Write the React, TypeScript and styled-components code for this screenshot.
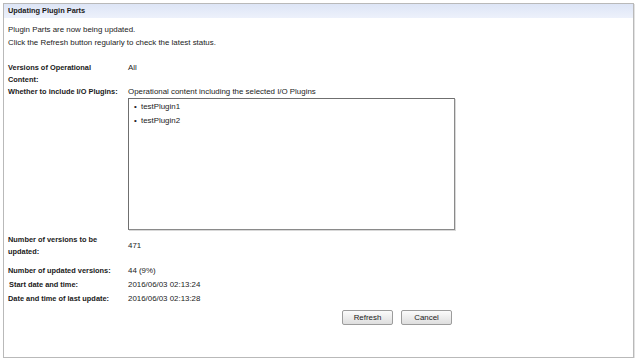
import * as React from "react";
import styled, { createGlobalStyle } from "styled-components";

const GlobalStyle = createGlobalStyle`
  html, body {
    margin: 0;
    padding: 0;
    background: #ffffff;
  }
  body {
    font-family: "Liberation Sans", Arial, sans-serif;
    font-size: 7.9px;
    color: #222;
  }
`;

const Panel = styled.div`
  margin: 3px 0 0 3px;
  width: 629px;
  height: 353px;
  border: 1px solid #b9b9b9;
  box-shadow: 1px 1px 0 #e2e2e2;
  display: flex;
  flex-direction: column;
  background: #fff;
`;

const TitleBar = styled.div`
  height: 14px;
  line-height: 14px;
  padding-left: 4px;
  font-size: 7.4px;
  font-weight: bold;
  color: #1a1a1a;
  background: linear-gradient(#dde5f6, #edf1fb);
`;

const Body = styled.div`
  padding: 5px 4px 0 4px;
  display: flex;
  flex-direction: column;
`;

const Message = styled.div`
  line-height: 13px;
`;

const Grid = styled.div<{ $top: number }>`
  display: grid;
  grid-template-columns: 120px 1fr;
  margin-top: ${(p) => p.$top}px;
  line-height: 12px;
`;

const Label = styled.div<{ $indent?: boolean; $gap?: number }>`
  font-size: 7.4px;
  font-weight: bold;
  color: #1a1a1a;
  padding-left: ${(p) => (p.$indent ? 1 : 0)}px;
  padding-right: 6px;
  margin-top: ${(p) => p.$gap ?? 0}px;
`;

const Value = styled.div<{ $center?: boolean; $gap?: number }>`
  align-self: ${(p) => (p.$center ? "center" : "start")};
  margin-top: ${(p) => p.$gap ?? 0}px;
`;

const ListBox = styled.ul`
  grid-column: 2;
  box-sizing: border-box;
  width: 327px;
  height: 132px;
  margin: 0;
  padding: 1px 0 0 5px;
  list-style: none;
  border: 1px solid #6f6f6f;
  border-right-color: #8a8a8a;
  border-bottom-color: #8a8a8a;
  box-shadow: 1px 1px 0 #d8d8d8;
`;

const ListItem = styled.li`
  line-height: 14px;
  &::before {
    content: "•";
    display: inline-block;
    width: 7px;
  }
`;

const Buttons = styled.div`
  display: flex;
  gap: 8px;
  margin-top: 5px;
  padding-left: 334px;
`;

const Button = styled.button`
  width: 51px;
  height: 15px;
  padding: 0;
  font-family: "Liberation Sans", Arial, sans-serif;
  font-size: 7.9px;
  color: #1a1a1a;
  border: 1px solid #9c9c9c;
  border-radius: 2px;
  background: linear-gradient(#fbfbfb, #dedede);
`;

const App: React.FC = () => {
  return (
    <>
      <GlobalStyle />
      <Panel>
        <TitleBar>Updating Plugin Parts</TitleBar>
        <Body>
          <Message>Plugin Parts are now being updated.</Message>
          <Message>Click the Refresh button regularly to check the latest status.</Message>
          <Grid $top={13}>
            <Label>Versions of Operational Content:</Label>
            <Value>All</Value>
            <Label>Whether to include I/O Plugins:</Label>
            <Value>Operational content including the selected I/O Plugins</Value>
            <ListBox>
              <ListItem>testPlugin1</ListItem>
              <ListItem>testPlugin2</ListItem>
            </ListBox>
            <Label $gap={4}>Number of versions to be updated:</Label>
            <Value $center $gap={4}>471</Value>
          </Grid>
          <Grid $top={7}>
            <Label>Number of updated versions:</Label>
            <Value>44 (9%)</Value>
            <Label $indent $gap={2}>Start date and time:</Label>
            <Value $gap={2}>2016/06/03 02:13:24</Value>
            <Label $gap={2}>Date and time of last update:</Label>
            <Value $gap={2}>2016/06/03 02:13:28</Value>
          </Grid>
          <Buttons>
            <Button>Refresh</Button>
            <Button>Cancel</Button>
          </Buttons>
        </Body>
      </Panel>
    </>
  );
};

export default App;
